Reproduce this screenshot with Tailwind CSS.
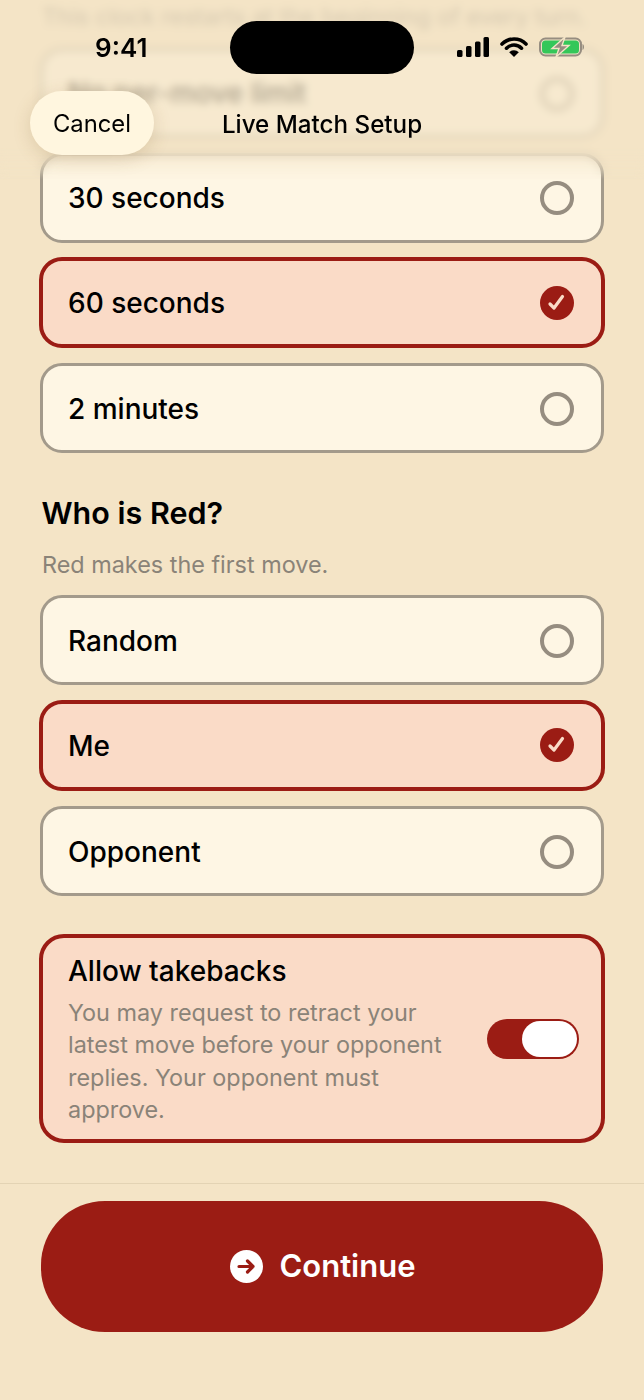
<!DOCTYPE html>
<html lang="en">
<head>
    <meta charset="UTF-8">
    <meta name="viewport" content="width=device-width, initial-scale=1.0">
    <title>Live Match Setup</title>
    <script src="https://cdn.jsdelivr.net/npm/@tailwindcss/browser@4"></script>
</head>
<body class="bg-[#f4e4c6]">
<div class="relative w-[644px] h-[1400px] overflow-hidden flex flex-col bg-[#f4e4c6] text-black font-['Inter','Liberation_Sans',sans-serif]">

    <!-- scroll content -->
    <div class="flex-1 flex flex-col px-10">
        <p class="h-[48px] text-[23.4px] leading-[34px] text-[#8a8378] px-[2px] whitespace-nowrap">This clock restarts at the beginning of every turn.</p>

        <div class="flex flex-col gap-[15px]">
            <div class="h-[90px] flex items-center justify-between pl-[25px] pr-[27px] rounded-[22px] border-[3px] border-[#a39a8b] bg-[#fef6e4]">
                <span class="text-[28px] font-[550]">No per-move limit</span>
                <span class="mt-[1px] w-[34px] h-[34px] rounded-full border-[4px] border-[#968d80]"></span>
            </div>
            <div class="h-[90px] flex items-center justify-between pl-[25px] pr-[27px] rounded-[22px] border-[3px] border-[#a39a8b] bg-[#fef6e4]">
                <span class="text-[28px] font-[550]">30 seconds</span>
                <span class="w-[34px] h-[34px] rounded-full border-[4px] border-[#968d80]"></span>
            </div>
            <div class="-mx-[1px] -mt-[1px] h-[91px] flex items-center justify-between pl-[25px] pr-[27px] rounded-[23px] border-[4px] border-[#9b1c14] bg-[#fadbc7]">
                <span class="mt-[1px] text-[28px] font-[550]">60 seconds</span>
                <svg class="w-[34px] h-[34px]" viewBox="0 0 34 34"><circle cx="17" cy="17" r="17" fill="#9b1c14"/><path d="M10 18l4 4 8.5-11.5" fill="none" stroke="#fadbc7" stroke-width="3.2" stroke-linecap="round" stroke-linejoin="round"/></svg>
            </div>
            <div class="h-[90px] flex items-center justify-between pl-[25px] pr-[27px] rounded-[22px] border-[3px] border-[#a39a8b] bg-[#fef6e4]">
                <span class="mt-[1px] text-[28px] font-[550]">2 minutes</span>
                <span class="mt-[1px] w-[34px] h-[34px] rounded-full border-[4px] border-[#968d80]"></span>
            </div>
        </div>

        <h2 class="mt-[40px] px-[1.5px] text-[30.5px] leading-[40px] font-semibold">Who is Red?</h2>
        <p class="mt-[16px] px-[2px] text-[23.4px] leading-[32px] text-[#8a8378]">Red makes the first move.</p>

        <div class="mt-[14px] flex flex-col gap-[15.5px]">
            <div class="h-[90px] flex items-center justify-between pl-[25px] pr-[27px] rounded-[22px] border-[3px] border-[#a39a8b] bg-[#fef6e4]">
                <span class="mt-[1px] text-[28px] font-[550]">Random</span>
                <span class="mt-[1px] w-[34px] h-[34px] rounded-full border-[4px] border-[#968d80]"></span>
            </div>
            <div class="-mx-[1px] -mt-[1px] h-[91px] flex items-center justify-between pl-[25px] pr-[27px] rounded-[23px] border-[4px] border-[#9b1c14] bg-[#fadbc7]">
                <span class="mt-[2px] text-[28px] font-[550]">Me</span>
                <svg class="w-[34px] h-[34px]" viewBox="0 0 34 34"><circle cx="17" cy="17" r="17" fill="#9b1c14"/><path d="M10 18l4 4 8.5-11.5" fill="none" stroke="#fadbc7" stroke-width="3.2" stroke-linecap="round" stroke-linejoin="round"/></svg>
            </div>
            <div class="h-[90px] flex items-center justify-between pl-[25px] pr-[27px] rounded-[22px] border-[3px] border-[#a39a8b] bg-[#fef6e4]">
                <span class="mt-[1px] text-[28px] font-[550]">Opponent</span>
                <span class="mt-[1px] w-[34px] h-[34px] rounded-full border-[4px] border-[#968d80]"></span>
            </div>
        </div>

        <div class="-mx-[1px] mt-[38px] h-[209px] flex items-center justify-between pl-[25px] pr-[22px] rounded-[25px] border-[4px] border-[#9b1c14] bg-[#fadbc7]">
            <div class="w-[385px] mt-[1px]">
                <div class="text-[28px] leading-[38px] font-[550]">Allow takebacks</div>
                <p class="mt-[7px] text-[23.4px] leading-[32.3px] text-[#8a8378]">You may request to retract your latest move before your opponent replies. Your opponent must approve.</p>
            </div>
            <div class="w-[92px] h-[40px] flex items-center justify-end pr-[2px] rounded-full bg-[#9b1c14]">
                <span class="w-[55px] h-[36px] rounded-full bg-white"></span>
            </div>
        </div>
    </div>

    <!-- footer -->
    <div class="h-[217px] border-t border-[#e3d3b4] pt-[17px] px-[41px]">
        <button class="w-[562px] h-[131px] pl-[2px] rounded-[64px] bg-[#9b1c14] flex items-center justify-center gap-[16px] text-white text-[31px] font-semibold">
            <svg class="w-[33px] h-[33px]" viewBox="0 0 33 33"><circle cx="16.5" cy="16.5" r="16.5" fill="#fff"/><path d="M9 16.5h14M17.5 11l5.5 5.5-5.5 5.5" fill="none" stroke="#9b1c14" stroke-width="3.2" stroke-linecap="round" stroke-linejoin="round"/></svg>
            <span>Continue</span>
        </button>
    </div>

    <!-- blurred header backdrop -->
    <div class="absolute top-0 left-0 right-0 h-[180px] bg-[#f4e4c6]/70 backdrop-blur-[4px] [mask-image:linear-gradient(to_bottom,black_148px,transparent_180px)]"></div>

    <!-- status bar -->
    <div class="absolute top-[21px] left-0 right-0 h-[53px]">
        <span class="absolute left-[95px] text-[26px] font-semibold leading-[53px]">9:41</span>
        <div class="absolute left-[230px] w-[184px] h-[53px] rounded-full bg-black"></div>
        <div class="absolute left-[457px] top-[16px] flex items-start">
            <svg class="w-[32px] h-[20px]" viewBox="0 0 32 20" fill="#000"><rect x="0" y="13" width="5.5" height="7" rx="1.5"/><rect x="9" y="9" width="5.5" height="11" rx="1.5"/><rect x="18" y="4.5" width="5.5" height="15.5" rx="1.5"/><rect x="26.5" y="0" width="5.5" height="20" rx="1.5"/></svg>
            <svg class="ml-[11px] w-[28px] h-[20px]" viewBox="0 0 28 20"><path d="M2 7a17 17 0 0 1 24 0M6.5 11.2a10.5 10.5 0 0 1 15 0" fill="none" stroke="#000" stroke-width="3.6" stroke-linecap="round"/><path d="M14 20l-4.8-4.8a7 7 0 0 1 9.6 0z" fill="#000"/></svg>
            <svg class="ml-[11px] w-[45px] h-[20px]" viewBox="0 0 45 20"><rect x="1" y="1.5" width="41" height="17" rx="5.5" fill="none" stroke="#968d80" stroke-width="2"/><rect x="3" y="3.5" width="37" height="13" rx="3.5" fill="#34c759"/><path d="M43.5 7v6c1-.4 1.5-1.6 1.5-3s-.5-2.6-1.5-3z" fill="#968d80"/><path d="M26 0L13 11.5h7L17 20 30 8.5h-7z" fill="#968d80" stroke="#f4e4c6" stroke-width="1.4"/></svg>
        </div>
    </div>

    <!-- nav bar -->
    <div class="absolute top-[91px] left-0 right-0 h-[64px]">
        <button class="absolute left-[30px] w-[124px] h-[64px] pt-[2px] rounded-full bg-[#fff6df] shadow-[0_4px_18px_rgba(120,90,40,0.18)] text-[23.8px]">Cancel</button>
        <div class="pt-[2px] text-center text-[24.2px] font-[550] leading-[64px]">Live Match Setup</div>
    </div>
</div>
</body>
</html>
